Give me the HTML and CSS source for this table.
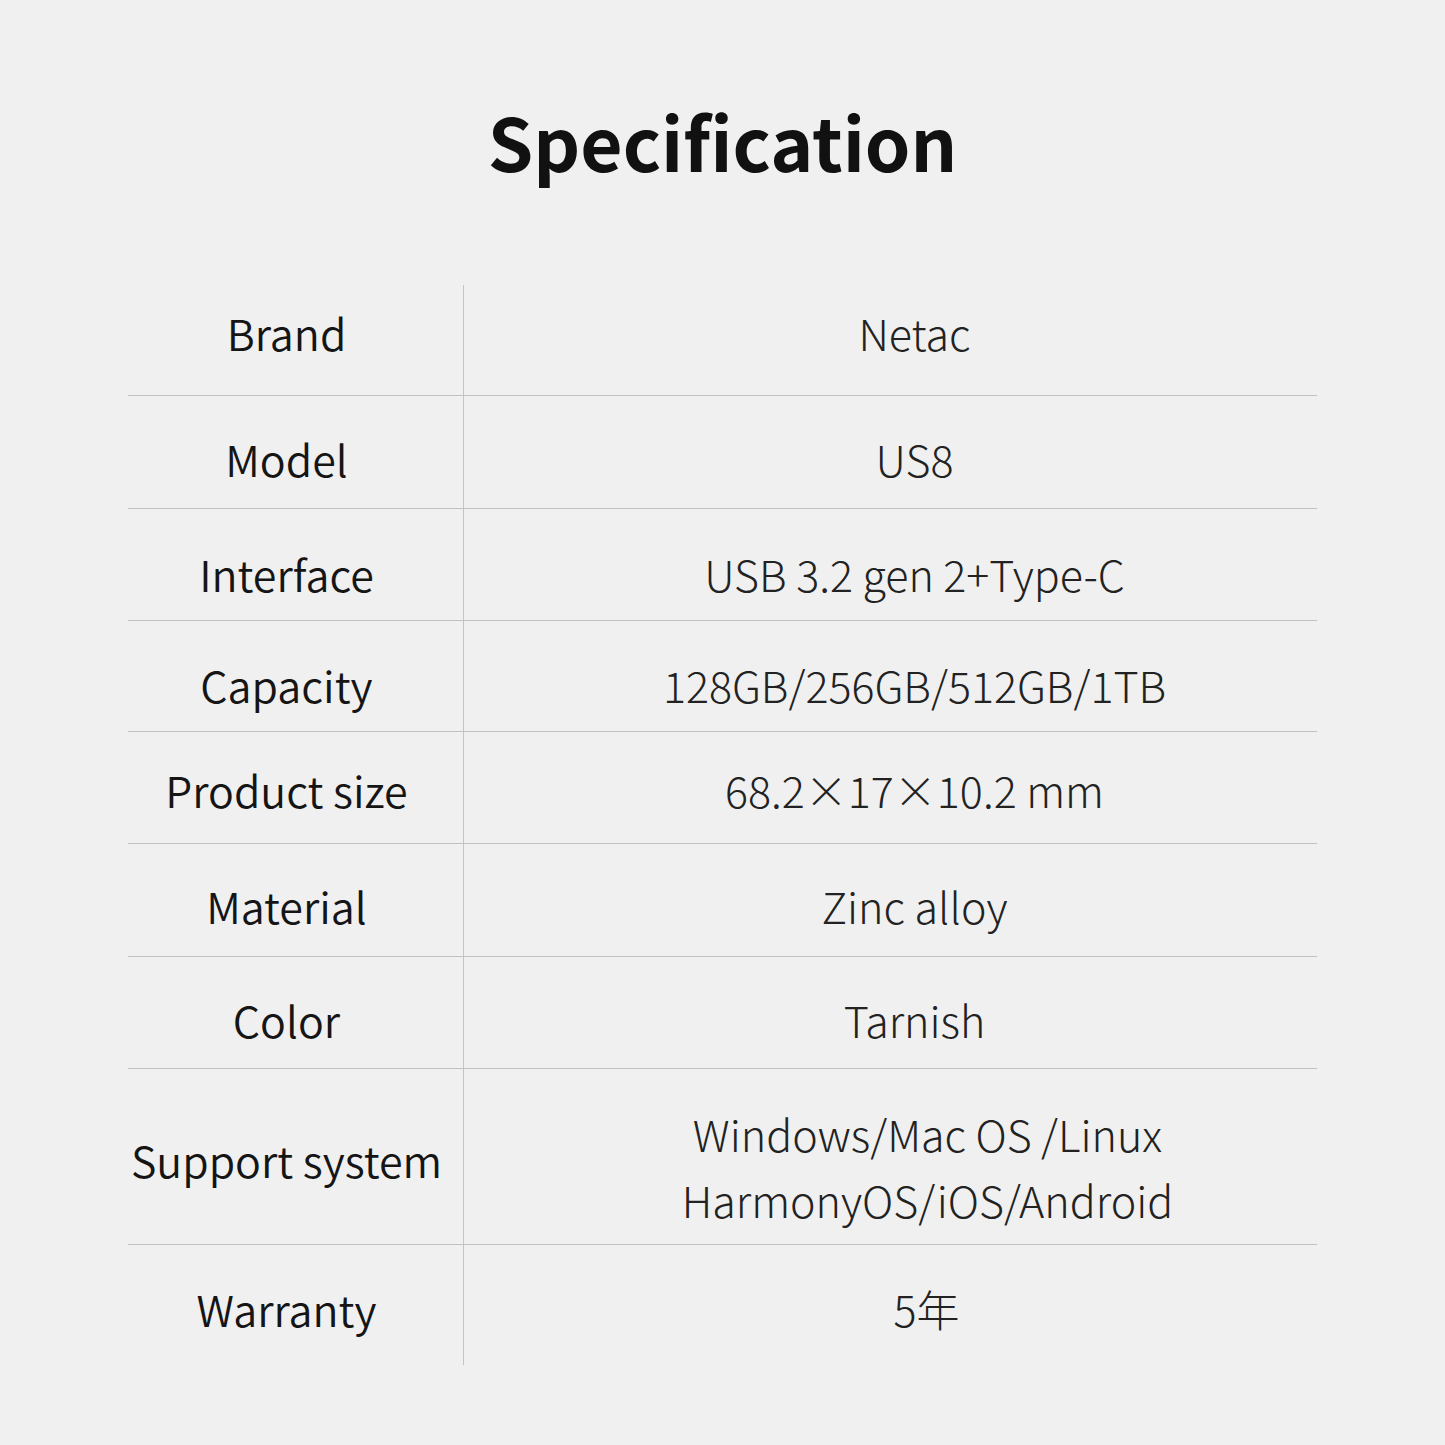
FILE: index.html
```html
<!DOCTYPE html>
<html lang="en">
<head>
<meta charset="utf-8">
<title>Specification</title>
<link rel="stylesheet" href="styles.css">
</head>
<body>
<main class="page">
  <h1 class="title">Specification</h1>
  <div class="spec">
    <div class="row r1"><div class="label">Brand</div><div class="value">Netac</div></div>
    <div class="row r2"><div class="label">Model</div><div class="value">US8</div></div>
    <div class="row r3"><div class="label">Interface</div><div class="value">USB 3.2 gen 2+Type-C</div></div>
    <div class="row r4"><div class="label">Capacity</div><div class="value">128GB/256GB/512GB/1TB</div></div>
    <div class="row r5"><div class="label">Product size</div><div class="value">68.2×17×10.2 mm</div></div>
    <div class="row r6"><div class="label">Material</div><div class="value">Zinc alloy</div></div>
    <div class="row r7"><div class="label">Color</div><div class="value">Tarnish</div></div>
    <div class="row r8"><div class="label">Support system</div><div class="value multi">Windows/Mac OS /Linux<br>HarmonyOS/iOS/Android</div></div>
    <div class="row r9 last"><div class="label">Warranty</div><div class="value wide">5年</div></div>
  </div>
</main>
</body>
</html>
```
FILE: styles.css
```css
html, body {
  margin: 0;
  padding: 0;
  background: #f0f0f0;
}
body {
  font-family: "Noto Sans CJK SC", "Noto Sans", sans-serif;
  color: #111;
}
.page {
  width: 1445px;
  height: 1445px;
  display: flex;
  flex-direction: column;
  align-items: center;
}
.title {
  margin: 92px 0 97px 0;
  height: 96px;
  font-size: 73px;
  line-height: 96px;
  font-weight: 700;
  color: #111;
}
.spec {
  width: 1189px;
  display: flex;
  flex-direction: column;
}
.row {
  --pt: 30px;
  --lpt: var(--pt);
  box-sizing: border-box;
  display: grid;
  grid-template-columns: 336px 1fr;
  border-bottom: 1.5px solid #c0c0c0;
}
.row.last { border-bottom: none; }
.r1 { height: 111px; --pt: 15px; }
.r2 { height: 113px; --pt: 30px; }
.r3 { height: 112px; --pt: 32px; }
.r4 { height: 111px; --pt: 31px; }
.r5 { height: 112px; --pt: 25px; }
.r6 { height: 113px; --pt: 29px; }
.r7 { height: 112px; --pt: 30px; }
.r8 { height: 176px; --pt: 31px; --lpt: 58px; }
.r9 { height: 120px; --pt: 31px; }
.label {
  box-sizing: border-box;
  padding: var(--lpt) 18px 0 0;
  text-align: center;
  white-space: nowrap;
  font-size: 43px;
  line-height: 64px;
  font-weight: 350;
  color: #151515;
  border-right: 1.5px solid #c4c4c4;
}
.value {
  box-sizing: border-box;
  padding: var(--pt) 0 0 48px;
  text-align: center;
  white-space: nowrap;
  font-size: 43px;
  line-height: 64px;
  font-weight: 300;
  color: #222;
}
.value.multi {
  padding-left: 74px;
  line-height: 66px;
}
.value.wide { padding-left: 72px; }
```
